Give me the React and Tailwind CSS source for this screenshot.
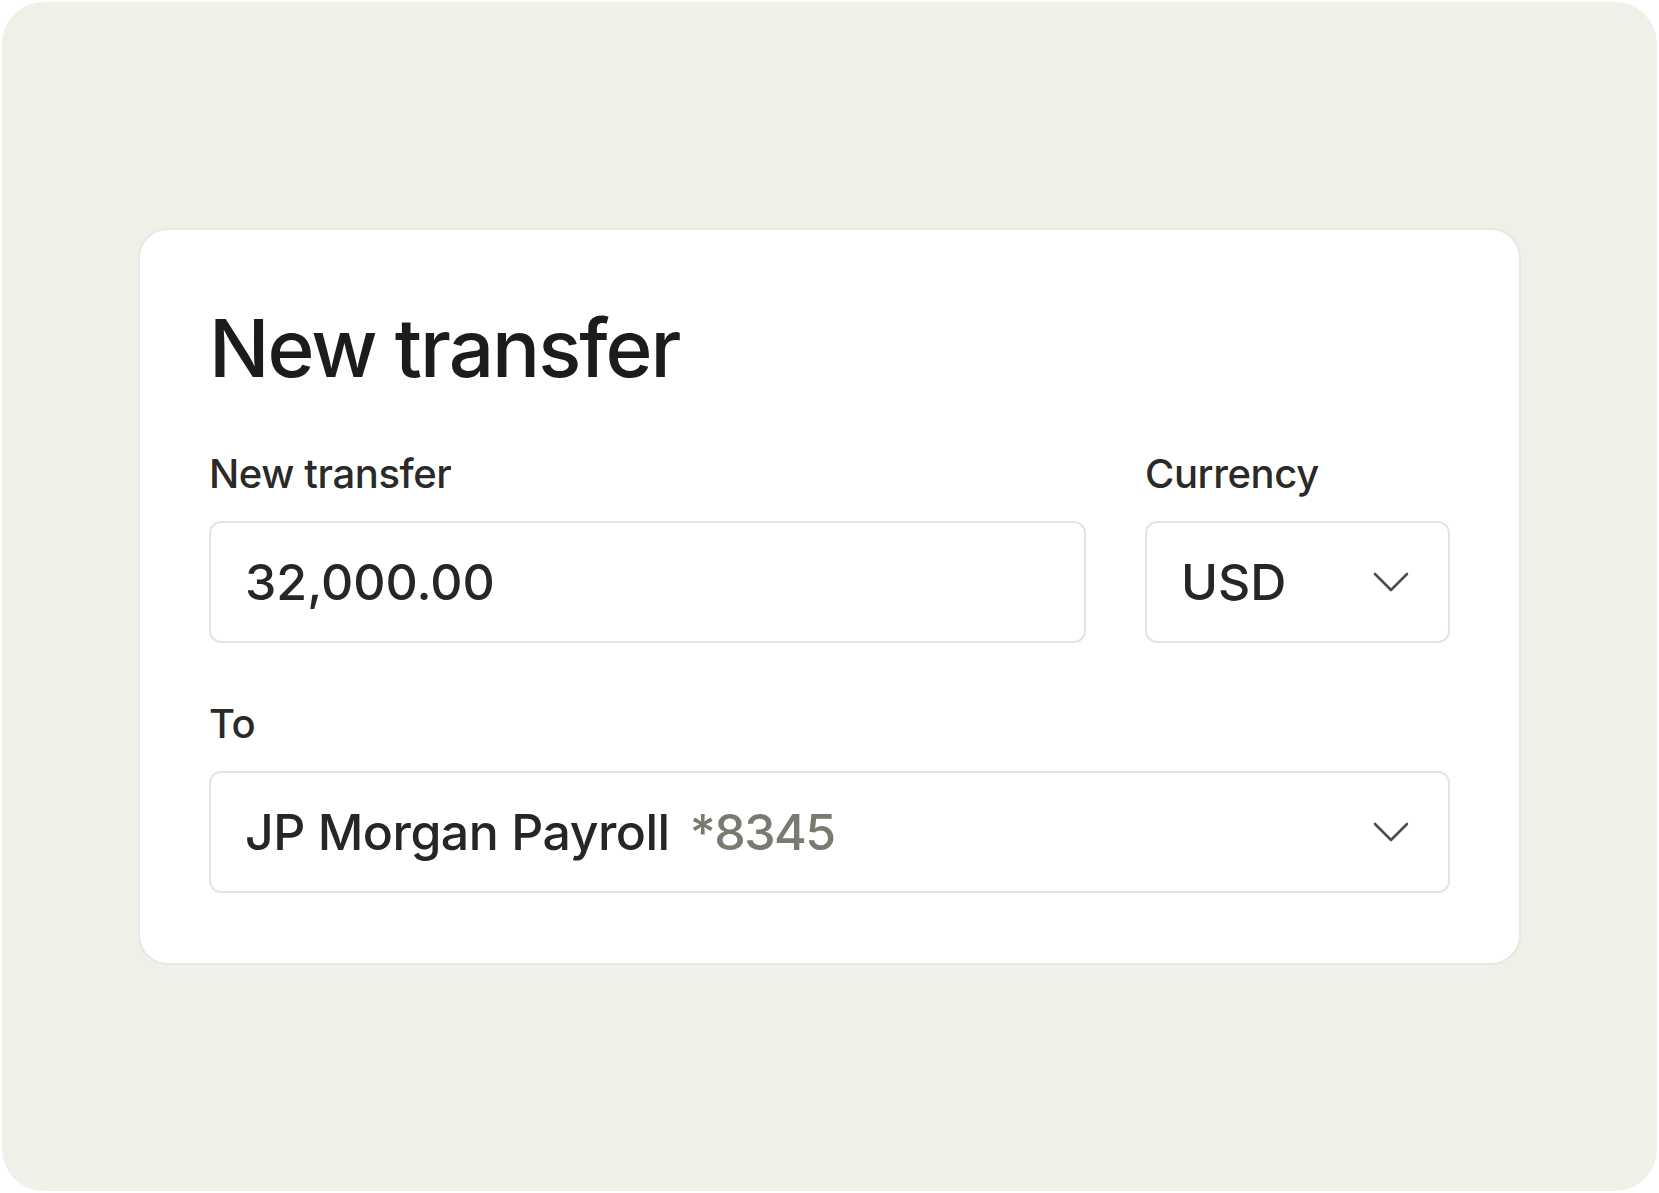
import React from "react";

function Chevron() {
  return (
    <svg width="36" height="20" viewBox="0 0 36 20" fill="none" className="shrink-0">
      <path d="M2 2 L18 18 L34 2" stroke="#4d4d4a" strokeWidth="2.6" strokeLinecap="round" strokeLinejoin="round" />
    </svg>
  );
}

export default function App() {
  return (
    <div className="w-[1659px] h-[1193px] bg-white p-[2px] font-['Inter',sans-serif]">
      <div className="w-full h-full rounded-[42px] bg-[#f0efe8] flex items-center justify-center">
        {/* Transfer card */}
        <div className="w-[1383px] bg-white border-2 border-[#e8e7e1] rounded-[30px] px-[69px] pt-[78px] pb-[70px] flex flex-col">
          <h1 className="text-[80px] leading-none font-medium tracking-[-0.025em] text-[#1c1c1a]">
            New transfer
          </h1>

          <div className="mt-[66px] flex gap-[59px]">
            <div className="flex-1 flex flex-col">
              <label className="text-[40px] leading-none font-medium text-[#2a2a28] tracking-[-0.01em]">New transfer</label>
              <div className="mt-[27px] h-[122px] border-2 border-[#e4e4e0] rounded-[12px] flex items-center pl-[34px]">
                <span className="text-[50px] font-medium text-[#262624]">32,000.00</span>
              </div>
            </div>

            <div className="w-[305px] flex flex-col">
              <label className="text-[40px] leading-none font-medium text-[#2a2a28] tracking-[-0.01em]">Currency</label>
              <div className="mt-[27px] h-[122px] border-2 border-[#e4e4e0] rounded-[12px] flex items-center justify-between pl-[34px] pr-[39px]">
                <span className="text-[50px] font-medium text-[#262624]">USD</span>
                <Chevron />
              </div>
            </div>
          </div>

          <label className="mt-[61px] text-[40px] leading-none font-medium text-[#2a2a28] tracking-[-0.01em]">To</label>
          <div className="mt-[27px] h-[122px] border-2 border-[#e4e4e0] rounded-[12px] flex items-center justify-between pl-[34px] pr-[39px]">
            <div className="flex items-baseline text-[50px] font-medium">
              <span className="text-[#262624] tracking-[-0.01em]">JP Morgan Payroll</span>
              <span className="ml-[20px] text-[#7a7a70] tracking-[-0.03em]">*8345</span>
            </div>
            <Chevron />
          </div>
        </div>
      </div>
    </div>
  );
}
